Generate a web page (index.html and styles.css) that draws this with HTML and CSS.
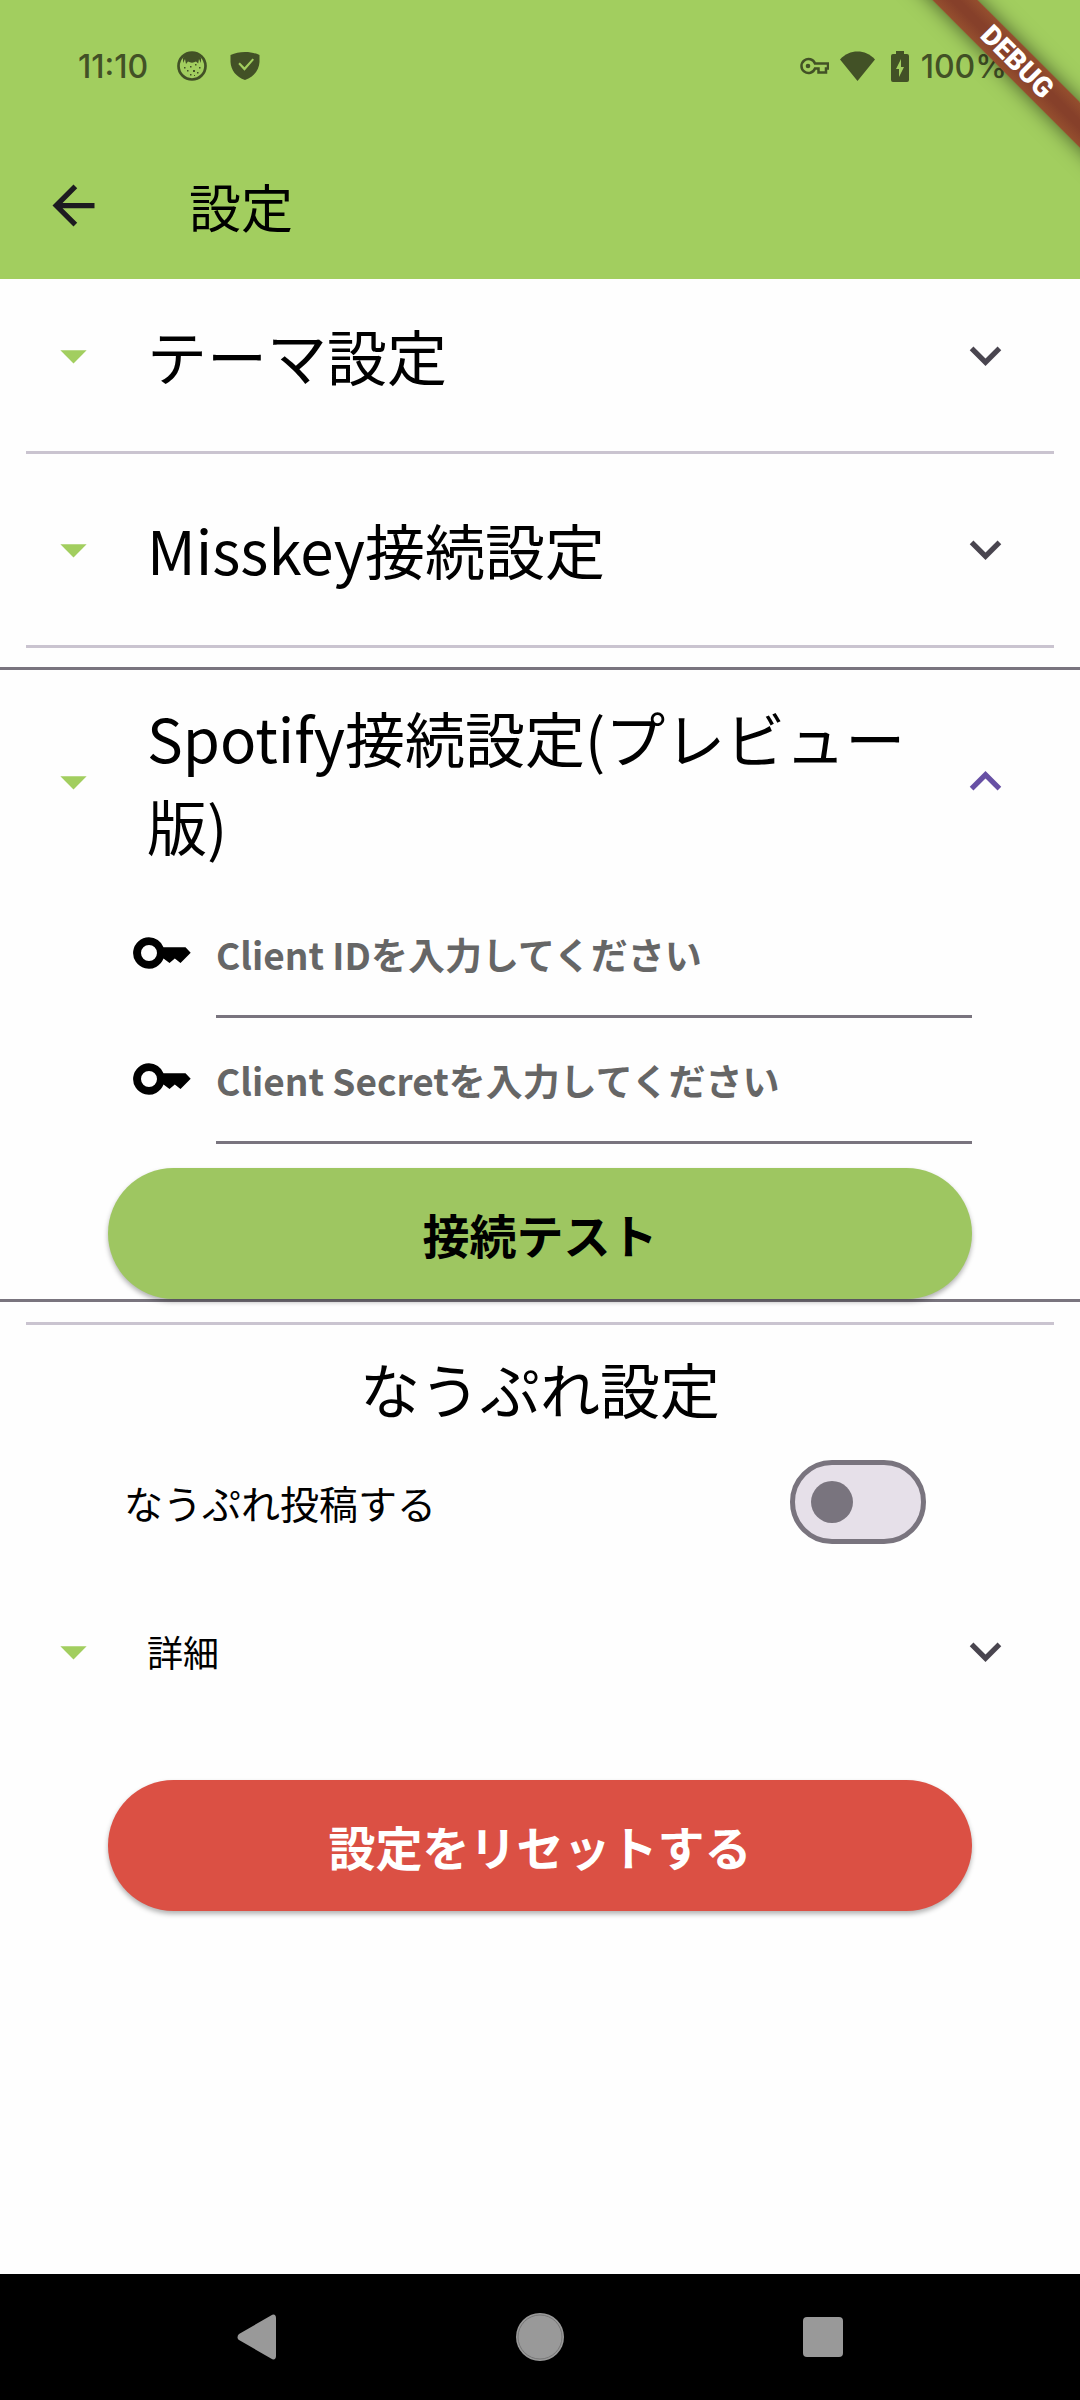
FILE: index.html
```html
<!DOCTYPE html>
<html lang="ja">
<head>
<meta charset="utf-8">
<meta name="viewport" content="width=device-width, initial-scale=1">
<title>設定</title>
<link rel="stylesheet" href="styles.css">
</head>
<body>
<svg class="sprite" aria-hidden="true">
  <symbol id="drop" viewBox="0 0 24 24"><path d="M7 10l5 5 5-5z"/></symbol>
  <symbol id="more" viewBox="0 0 24 24"><path d="M16.59 8.59 12 13.17 7.41 8.59 6 10l6 6 6-6z"/></symbol>
  <symbol id="less" viewBox="0 0 24 24"><path d="m12 8-6 6 1.41 1.41L12 10.83l4.59 4.58L18 14z"/></symbol>
  <symbol id="key" viewBox="0 0 58 32"><path fill-rule="evenodd" d="M16 .3a15.700 15.700 0 1 0 14.500 21.200L36.500 26l5.300-4.500L47.500 26l5-5 5.200-5.300-5.200-5.400H30.500A15.700 15.700 0 0 0 16 .3zM16 8a8 8 0 1 1 0 16 8 8 0 0 1 0-16z"/></symbol>
</svg>
<div class="screen">
  <header class="top">
    <div class="status">
      <span>11:10</span>
      <svg class="face" viewBox="0 0 30 30"><circle cx="15" cy="15" r="13.500" fill="none" stroke="currentColor" stroke-width="2.700"/><path d="M6 7C8 3 12 1.500 15 1.500S22 3 24 7v5l-2-4-.8 4.500L19 10.500c-2.500 1.500-5.500 1.500-8 0L9 13 8 8l-2 4z"/><path d="M7 16h1.500v1.500H7zM13 15h1.500v1.500H13zM18 13h1.500v1.500H18zM22 16h1.500v1.500H22zM10 19h1.500v1.500H10zM16 19h2v2h-2zM13 23h1.500v1.500H13zM20 21h1.500v1.500H20zM17 24h1v1h-1z"/></svg>
      <svg class="shield" viewBox="0 0 30 30"><path fill-rule="evenodd" d="M15 1C9.500 1 5 2 .5 4v7C1 19 6 26 15 29c9-3 14-10 14.500-18V4C25 2 20.500 1 15 1zM9.800 11.500l4.700 4.800L22.500 7.500l1.500 1.300L14.500 19.700 8.300 13z"/></svg>
      <span class="spring"></span>
      <svg class="vpn" viewBox="0 0 29 18"><path d="M15 6.500A7 7 0 1 0 15 11.500h3.500V15.500h7.500V11.500h2V6.500z" fill="none" stroke="currentColor" stroke-width="2.500"/><circle cx="8" cy="9" r="2.300"/></svg>
      <svg class="wifi" viewBox="0 0 35 30"><path d="M0 8.500C5 3 11 .5 17.500.5S30 3 35 8.500L17.500 30z"/></svg>
      <svg class="battery" viewBox="0 0 18 31"><path fill-rule="evenodd" d="M5 0h8v3h3a2 2 0 0 1 2 2v24a2 2 0 0 1-2 2H2a2 2 0 0 1-2-2V5a2 2 0 0 1 2-2h3zM10 8 5 18h3v8l5-10h-3z"/></svg>
      <span>100%</span>
    </div>
    <div class="appbar">
      <button class="back" type="button" aria-label="戻る"><svg class="icon" viewBox="0 0 24 24"><path d="M20 11H7.830l5.590-5.590L12 4l-8 8 8 8 1.410-1.410L7.830 13H20z"/></svg></button>
      <h1>設定</h1>
    </div>
    <div class="debug">DEBUG</div>
  </header>

  <main>
    <button class="row" type="button" aria-expanded="false"><svg class="icon drop"><use href="#drop"/></svg><span class="title">テーマ設定</span><svg class="icon chevron"><use href="#more"/></svg></button>
    <hr>
    <button class="row" type="button" aria-expanded="false"><svg class="icon drop"><use href="#drop"/></svg><span class="title">Misskey接続設定</span><svg class="icon chevron"><use href="#more"/></svg></button>
    <hr>
    <section class="open">
      <button class="row" type="button" aria-expanded="true"><svg class="icon drop"><use href="#drop"/></svg><span class="title">Spotify接続設定(プレビュー版)</span><svg class="icon chevron active"><use href="#less"/></svg></button>
      <form class="fields">
        <label class="field"><svg class="key"><use href="#key"/></svg><input type="text" aria-label="Client ID" placeholder="Client IDを入力してください"></label>
        <label class="field"><svg class="key"><use href="#key"/></svg><input type="text" aria-label="Client Secret" placeholder="Client Secretを入力してください"></label>
        <button class="pill" type="button">接続テスト</button>
      </form>
    </section>
    <hr>
    <h2>なうぷれ設定</h2>
    <div class="toggle">
      <label for="post">なうぷれ投稿する</label>
      <input id="post" class="switch" type="checkbox" role="switch">
    </div>
    <button class="row detail" type="button" aria-expanded="false"><svg class="icon drop"><use href="#drop"/></svg><span class="title">詳細</span><svg class="icon chevron"><use href="#more"/></svg></button>
    <div class="reset"><button class="pill danger" type="button">設定をリセットする</button></div>
  </main>

  <nav class="navbar">
    <button type="button" aria-label="戻る"><svg viewBox="0 0 48 48"><path d="M38 2.500c3-2 5-.5 5 2.500v38c0 3-2 4.500-5 2.500L6 27c-2-1.500-2-4 0-6z"/></svg></button>
    <button type="button" aria-label="ホーム"><svg viewBox="0 0 48 48"><circle cx="24" cy="24" r="24"/><circle cx="24" cy="24" r="22" fill="none" stroke="#777"/></svg></button>
    <button type="button" aria-label="アプリ履歴"><svg viewBox="0 0 48 48"><rect x="4" y="4" width="40" height="40" rx="4"/></svg></button>
  </nav>
</div>
</body>
</html>
```
FILE: styles.css
```css
* { box-sizing: border-box; }

body {
  margin: 0;
  background: #fefefe;
  color: #000;
  font-family: "Noto Sans CJK JP", sans-serif;
}

button {
  border: 0;
  padding: 0;
  background: none;
  color: inherit;
  font: inherit;
}

svg { display: block; flex: none; fill: currentColor; }

.sprite { position: absolute; width: 0; height: 0; }

.screen { display: flex; flex-direction: column; min-height: 100vh; }

.icon { width: 63px; height: 63px; }

/* Top area */
.top {
  position: relative;
  overflow: hidden;
  background: #a2ce5f;
}

.status {
  display: flex;
  align-items: center;
  height: 132px;
  padding: 0 73px 0 78px;
  color: #425126;
  font: 500 32px "Inter", sans-serif;
}

.face { width: 30px; height: 30px; margin-left: 29px; }
.shield { width: 30px; height: 30px; margin-left: 23px; }
.spring { flex: 1; }
.vpn { width: 29px; height: 18px; }
.wifi { width: 35px; height: 30px; margin: 0 16px 0 11px; }
.battery { width: 18px; height: 31px; margin-right: 12px; }

.appbar {
  display: flex;
  align-items: center;
  gap: 84px;
  height: 147px;
  padding: 0 42px;
}

.back { color: #1d1b20; }

h1 { margin: 0; font-size: 52px; font-weight: 400; line-height: 76px; }

.debug {
  position: absolute;
  top: 46px;
  right: -137px;
  width: 400px;
  height: 32px;
  transform: rotate(45deg);
  background: linear-gradient(#954f2e, #86402a 40%, #86402a 60%, #954f2e);
  box-shadow: 0 0 20px rgba(0, 0, 0, .55);
  color: #fff;
  font: 900 28px/32px Roboto, sans-serif;
  text-align: center;
}

/* Settings list */
main { flex: 1; }

.row {
  display: flex;
  align-items: center;
  gap: 42px;
  width: 100%;
  min-height: 152px;
  padding: 23px 63px 23px 42px;
  text-align: left;
}

.title { flex: 1; font-size: 60px; line-height: 88px; }
.drop { color: #a2ce5f; }
.chevron { color: #49454f; }
.active { color: #6750a4; }

hr {
  height: 3px;
  margin: 20px 26px 19px;
  border: 0;
  background: #cac4d0;
}

.open { border: solid #79747e; border-width: 3px 0; }

.fields { padding: 0 108px; }

.field { display: flex; align-items: center; gap: 25px; padding-left: 25px; }

.key { width: 58px; height: 32px; margin-bottom: 4px; }

input[type="text"] {
  flex: 1;
  min-width: 0;
  height: 126px;
  padding: 0;
  border: 0;
  border-bottom: 3px solid #79747e;
  background: none;
  color: #000;
  font: 700 37px "Noto Sans CJK JP", sans-serif;
}

input::placeholder { color: #666; opacity: 1; }

.pill {
  display: block;
  width: 100%;
  height: 131px;
  border-radius: 66px;
  background: #9ec661;
  box-shadow: 0 3px 5px rgba(0, 0, 0, .3);
  font-size: 47px;
  font-weight: 700;
}

.fields .pill { margin-top: 24px; }

.danger { background: #db5044; color: #fff; }

h2 {
  margin: 0;
  font-size: 60px;
  font-weight: 400;
  line-height: 88px;
  text-align: center;
}

.toggle {
  display: flex;
  align-items: center;
  justify-content: space-between;
  height: 140px;
  padding: 0 154px 0 124px;
  font-size: 39px;
}

.switch {
  display: flex;
  align-items: center;
  appearance: none;
  width: 136px;
  height: 84px;
  margin: 0;
  padding: 0 16px;
  border: 5px solid #79747e;
  border-radius: 42px;
  background: #e6e0e9;
}

.switch::before {
  content: "";
  width: 42px;
  height: 42px;
  border-radius: 50%;
  background: #79747e;
}

.switch:checked { justify-content: flex-end; }

.detail { min-height: 158px; }
.detail .title { font-size: 36px; }

.reset { padding: 50px 108px; }

/* System navigation */
.navbar {
  display: grid;
  grid-template-columns: repeat(3, 1fr);
  height: 126px;
  padding: 0 115px;
  background: #000;
  color: #999;
}

.navbar button { display: grid; place-items: center; }
.navbar svg { width: 48px; height: 48px; }
```
